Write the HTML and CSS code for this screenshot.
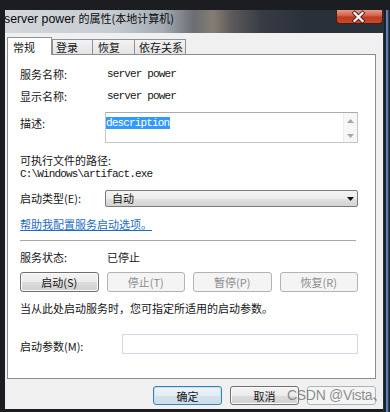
FILE: index.html
```html
<!DOCTYPE html>
<html lang="zh-CN">
<head>
<meta charset="utf-8">
<title>server power 的属性(本地计算机)</title>
<link rel="stylesheet" href="styles.css">
</head>
<body>
<div class="screen">
  <div class="window">
    <div class="titlebar">
      <div class="title">server power <span class="title-cjk">的属性(本地计算机)</span></div>
      <div class="close">
        <svg width="47" height="14" viewBox="0 0 47 14">
          <path d="M19.5 3 L27.5 11 M27.5 3 L19.5 11" stroke="#5a1d12" stroke-width="4" stroke-linecap="square" fill="none"/>
          <path d="M19.5 3 L27.5 11 M27.5 3 L19.5 11" stroke="#ffffff" stroke-width="2.2" stroke-linecap="square" fill="none"/>
        </svg>
      </div>
    </div>
    <div class="body">
      <div class="tabs">
        <div class="tab active">常规</div>
        <div class="tab t-login">登录</div>
        <div class="tab t-recover">恢复</div>
        <div class="tab t-deps">依存关系</div>
      </div>
      <div class="pane">
        <div class="row">
          <span class="label">服务名称:</span>
          <span class="value mono">server power</span>
        </div>
        <div class="row r-gap6">
          <span class="label">显示名称:</span>
          <span class="value mono">server power</span>
        </div>
        <div class="row r-gap8">
          <span class="label label-desc">描述:</span>
          <div class="textbox">
            <div class="textbox-text"><span class="selected mono">description</span></div>
            <div class="vscroll">
              <svg width="7" height="4" viewBox="0 0 7 4"><path d="M0 4 L3.5 0 L7 4 Z" fill="#a6a6a6"/></svg>
              <svg width="7" height="4" viewBox="0 0 7 4"><path d="M0 0 L3.5 4 L7 0 Z" fill="#a6a6a6"/></svg>
            </div>
          </div>
        </div>
        <div class="path-label">可执行文件的路径:</div>
        <div class="path mono">C:\Windows\artifact.exe</div>
        <div class="row r-gap9">
          <span class="label label-select">启动类型(E):</span>
          <div class="combo">
            <span class="combo-text">自动</span>
            <svg class="combo-arrow" width="7" height="4" viewBox="0 0 7 4"><path d="M0 0 L7 0 L3.5 4 Z" fill="#111"/></svg>
          </div>
        </div>
        <div class="link">帮助我配置服务启动选项。</div>
        <div class="separator"></div>
        <div class="row r-gap8">
          <span class="label">服务状态:</span>
          <span class="value">已停止</span>
        </div>
        <div class="svc-buttons">
          <button class="btn">启动(S)</button>
          <button class="btn disabled">停止(T)</button>
          <button class="btn disabled">暂停(P)</button>
          <button class="btn disabled">恢复(R)</button>
        </div>
        <div class="hint">当从此处启动服务时，您可指定所适用的启动参数。</div>
        <div class="row params">
          <span class="label label-params">启动参数(M):</span>
          <div class="input"></div>
        </div>
      </div>
      <div class="footer">
        <button class="btn fbtn default">确定</button>
        <button class="btn fbtn">取消</button>
        <button class="btn fbtn disabled"></button>
      </div>
    </div>
  </div>
  <div class="edge"></div>
</div>
<div class="watermark">CSDN @Vista、</div>
</body>
</html>
```

FILE: styles.css
```css
* {
  box-sizing: border-box;
}

html,
body {
  margin: 0;
  padding: 0;
}

body {
  width: 390px;
  height: 412px;
  overflow: hidden;
  background: #1c1d20;
  font-family: "Noto Sans CJK SC", sans-serif;
  font-size: 11px;
  color: #151515;
  position: relative;
}

.screen {
  display: flex;
  padding-top: 10px;
  padding-left: 5px;
  height: 412px;
}

.window {
  width: 378px;
  height: 399px;
  display: flex;
  flex-direction: column;
}

.edge {
  width: 7px;
  height: 402px;
  background: linear-gradient(90deg, #2c3038 0, #2c3038 1px, #18202c 1px, #18202c 3px, #5079b0 3px, #6d97cf 4px, #3b5a86 5px, #1c2738 6px);
}

/* Title bar */
.titlebar {
  height: 23px;
  display: flex;
  overflow: hidden;
  background: linear-gradient(90deg, #d3d7db 0%, #c6ccd2 28%, #a3aab2 42%, #6a6d72 50%, #857d74 55%, #5c5a5a 60%, #363b44 68%, #2a3039 80%, #283039 100%);
}

.title {
  margin-left: -1px;
  line-height: 17px;
  font-family: "Liberation Sans", "Noto Sans CJK SC", sans-serif;
  font-size: 12.3px;
  color: #0a0a0a;
  white-space: nowrap;
}

.title-cjk {
  font-family: "Noto Sans CJK SC", sans-serif;
  font-size: 11px;
}

.close {
  margin-left: auto;
  width: 47px;
  height: 14px;
  flex: none;
  border: 1px solid #4a1c14;
  border-top: none;
  border-radius: 0 0 4px 4px;
  background: linear-gradient(#e59a86 0%, #d4684f 40%, #bd3b22 55%, #c94a2c 100%);
  display: flex;
  align-items: center;
  justify-content: center;
}

.close svg {
  display: block;
  margin-left: -2px;
}

/* Dialog body */
.body {
  flex: 1;
  background: #f0f0f0;
  padding: 4px 7px 4px 2px;
  display: flex;
  flex-direction: column;
}

.tabs {
  display: flex;
  align-items: flex-start;
  height: 18px;
  margin-bottom: -1px;
  position: relative;
  z-index: 1;
}

.tab {
  margin-top: 2px;
  height: 15px;
  border: 1px solid #8e9196;
  border-bottom: none;
  background: linear-gradient(#f3f3f3, #e3e3e3);
  line-height: 14px;
  padding-left: 3px;
  white-space: nowrap;
}

.tab.active {
  margin-top: 0;
  height: 18px;
  width: 45px;
  padding-left: 5px;
  padding-top: 1px;
  line-height: 16px;
  background: #ffffff;
}

.t-login {
  width: 41px;
}

.t-recover {
  width: 43px;
  margin-left: -1px;
  padding-left: 5px;
}

.t-deps {
  width: 52px;
  margin-left: -1px;
  padding-left: 4px;
}

.pane {
  height: 325px;
  border: 1px solid #898c95;
  background: #ffffff;
  padding: 11px 17px 24px 12px;
}

.row {
  display: flex;
  align-items: flex-start;
}

.r-gap6 {
  margin-top: 6px;
}

.r-gap8 {
  margin-top: 8px;
}

.r-gap9 {
  margin-top: 9px;
}

.label {
  width: 85px;
  flex: none;
  line-height: 16px;
  white-space: nowrap;
}

.value {
  padding-left: 2px;
  line-height: 16px;
  white-space: nowrap;
}

.mono {
  font-family: "Liberation Mono", monospace;
  font-size: 11px;
  letter-spacing: -0.85px;
}

.label-desc {
  padding-top: 3px;
}

.textbox {
  width: 253px;
  height: 31px;
  border: 1px solid #c2c5cc;
  border-top-color: #a9abb2;
  display: flex;
  background: #fff;
}

.textbox-text {
  flex: 1;
}

.selected {
  display: inline-block;
  background: #3399ff;
  color: #ffffff;
  line-height: 12px;
  height: 12px;
  padding-right: 1px;
}

.vscroll {
  width: 14px;
  background: #f6f6f6;
  border-left: 1px solid #ededed;
  display: flex;
  flex-direction: column;
  align-items: center;
  padding-top: 6px;
  gap: 11px;
}

.vscroll svg {
  display: block;
}

.path-label {
  margin-top: 10px;
  line-height: 14px;
}

.path {
  line-height: 14px;
  white-space: nowrap;
}

.label-select {
  line-height: 17px;
}

.combo {
  width: 253px;
  height: 17px;
  border: 1px solid #7a7a7a;
  border-radius: 2px;
  background: linear-gradient(#f4f4f4 0%, #ececec 50%, #e0e0e0 51%, #d4d4d4 100%);
  display: flex;
  align-items: center;
  padding-left: 6px;
  padding-right: 2px;
}

.combo-text {
  line-height: 15px;
  flex: 1;
}

.combo-arrow {
  display: block;
  margin-right: 1px;
}

.link {
  margin-top: 9px;
  line-height: 16px;
  color: #1c6cc4;
  text-decoration: underline;
  white-space: nowrap;
}

.separator {
  margin-top: 8px;
  width: 336px;
  border-top: 1px solid #a8a8a8;
}

.svc-buttons {
  margin-top: 7px;
  display: grid;
  grid-template-columns: repeat(4, 1fr);
  column-gap: 8px;
}

.btn {
  font-family: "Noto Sans CJK SC", sans-serif;
  font-size: 11px;
  height: 20px;
  padding: 0;
  margin: 0;
  border: 1px solid #707070;
  border-radius: 3px;
  background: linear-gradient(#f3f3f3 0%, #ececec 50%, #dddddd 51%, #d0d0d0 100%);
  box-shadow: inset 0 0 0 1px #fbfbfb;
  color: #151515;
  line-height: 16px;
  white-space: nowrap;
}

.btn.disabled {
  border-color: #b0b4b8;
  background: #f4f4f4;
  box-shadow: none;
  color: #8c8c8c;
}

.hint {
  margin-top: 8px;
  line-height: 16px;
  white-space: nowrap;
}

.params {
  margin-top: 18px;
}

.label-params {
  width: 102px;
  line-height: 20px;
  padding-top: 2px;
}

.input {
  width: 236px;
  height: 20px;
  border: 1px solid #cfd8e3;
  background: #fff;
}

.footer {
  margin-top: 7px;
  display: flex;
  justify-content: flex-end;
  gap: 8px;
}

.fbtn {
  width: 69px;
  height: 19px;
}

.btn.default {
  border-color: #3c7fb1;
  background: linear-gradient(#eef4f9 0%, #e3ecf4 50%, #d6e2ee 51%, #cbdae8 100%);
  box-shadow: inset 0 0 0 1px #bfe3f8;
}

.watermark {
  position: absolute;
  left: 287px;
  top: 386px;
  font-family: "Liberation Sans", "Noto Sans CJK SC", sans-serif;
  font-size: 14px;
  letter-spacing: -0.3px;
  line-height: 18px;
  color: rgba(120, 120, 120, 0.85);
  white-space: nowrap;
}
```
